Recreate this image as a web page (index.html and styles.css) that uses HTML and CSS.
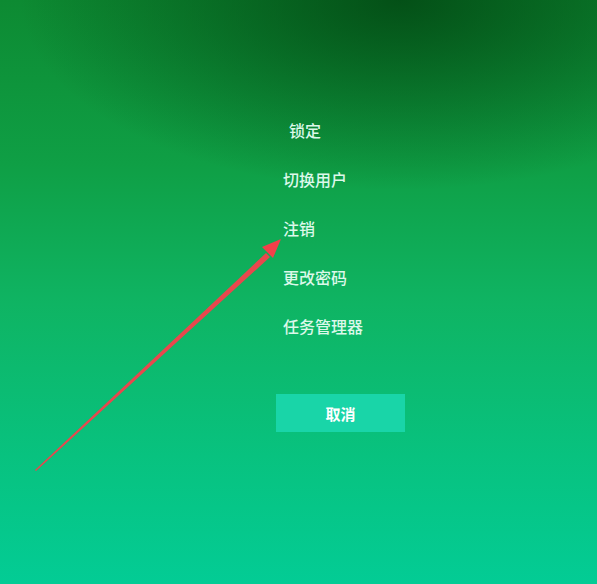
FILE: index.html
```html
<!doctype html>
<html>
  <head>
    <meta charset="utf-8">
    <meta name="viewport" content="width=device-width, initial-scale=1">
    <title>安全选项</title>
    <link rel="stylesheet" href="styles.css">
  </head>
  <body>
    <div class="screen">
      <ul class="options">
        <li class="lock">锁定</li>
        <li>切换用户</li>
        <li>注销</li>
        <li>更改密码</li>
        <li>任务管理器</li>
      </ul>
      <button class="cancel">取消</button>

      <!-- red annotation arrow -->
      <svg class="arrow" width="597" height="584" viewBox="0 0 597 584">
        <path d="M35 470 L266 253 L270 257 L36 471 Z" fill="#e9474d"/>
        <path d="M281 239 L262 247 L273 258 Z" fill="#f2404a"/>
      </svg>
    </div>
  </body>
</html>
```

FILE: styles.css
```css
html, body {
  margin: 0;
  height: 100%;
}
body {
  font-family: "Noto Sans CJK SC", "Noto Sans", sans-serif;
}
.screen {
  position: relative;
  width: 597px;
  height: 584px;
  overflow: hidden;
  background:
    radial-gradient(ellipse 380px 190px at 400px 0px, rgba(2, 70, 18, 0.85), rgba(2, 70, 18, 0) 100%),
    linear-gradient(180deg, #0d8a32 0%, #0f9f45 28%, #0fb463 52%, #08c27f 78%, #03cc95 100%);
}
.options {
  list-style: none;
  margin: 0;
  padding: 120px 0 0 283px;
  display: flex;
  flex-direction: column;
  gap: 29px;
}
.options li {
  font-size: 16px;
  line-height: 20px;
  font-weight: 500;
  color: #dcf8ea;
}
.options .lock {
  margin-left: 6px;
}
.cancel {
  display: block;
  margin: 58px 0 0 276px;
  width: 129px;
  height: 38px;
  border: none;
  background: #19d5a8;
  color: #ffffff;
  font-family: "Noto Sans CJK SC", sans-serif;
  font-size: 15px;
  font-weight: bold;
}
.arrow {
  position: absolute;
  left: 0;
  top: 0;
}
```
